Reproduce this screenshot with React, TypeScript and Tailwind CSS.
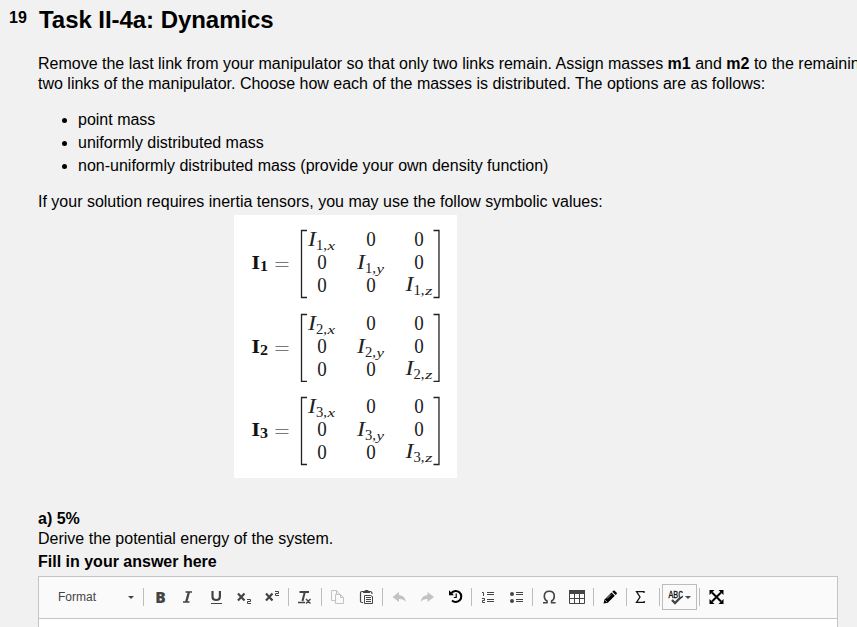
import type { ReactNode } from "react";

const mathFont = "'Liberation Serif', serif";

function Entry({ x, y, n, axis }: { x: number; y: number; n: number; axis: string }) {
  return (
    <g fill="#222" fontFamily={mathFont}>
      <text x={x + 0.5} y={y} fontSize="20" fontStyle="italic" textLength="8" lengthAdjust="spacingAndGlyphs">I</text>
      <text x={x + 8.5} y={y + 4} fontSize="14.500" textLength="11" lengthAdjust="spacingAndGlyphs">{n},</text>
      <text x={x + 20} y={y + 4} fontSize="13" fontStyle="italic" textLength="7.5" lengthAdjust="spacingAndGlyphs">{axis}</text>
    </g>
  );
}

function Zero({ x, y }: { x: number; y: number }) {
  return (
    <text x={x - 4.75} y={y} fontSize="20" fill="#222" textLength="9.500" lengthAdjust="spacingAndGlyphs" fontFamily={mathFont}>0</text>
  );
}

function Tensor({ n }: { n: number }) {
  return (
    <svg width="223" height="83.700" viewBox="0 0 223 83.700" className="block shrink-0">
      <text x="17.5" y="54.500" fontSize="19" fontWeight="bold" fill="#111" fontFamily={mathFont} textLength="8.5" lengthAdjust="spacingAndGlyphs">I</text>
      <text x="26" y="56.500" fontSize="14" fontWeight="bold" fill="#111" fontFamily={mathFont} textLength="8" lengthAdjust="spacingAndGlyphs">{n}</text>
      <path d="M41.5 47.5h13M41.5 51.5h13" stroke="#777" />
      <path d="M73 15.500h-5.500v67H73M199.500 15.500h5.500v67h-5.500" fill="none" stroke="#222" strokeWidth="1.300" />
      <Entry x={73.500} y={31} n={n} axis="x" />
      <Zero x={137} y={31.500} />
      <Zero x={185} y={31.500} />
      <Zero x={88} y={54.500} />
      <Entry x={122.500} y={54} n={n} axis="y" />
      <Zero x={185} y={54.500} />
      <Zero x={88} y={77} />
      <Zero x={137} y={77} />
      <Entry x={171} y={76.500} n={n} axis="z" />
    </svg>
  );
}

function Tool({ children, label }: { children: ReactNode; label: string }) {
  return (
    <button aria-label={label} className="flex h-7 w-7 shrink-0 items-center justify-center">
      <svg width="16" height="16" viewBox="0 0 16 16" fill="none" stroke="none" className="overflow-visible text-[#444]">
        {children}
      </svg>
    </button>
  );
}

function Sep() {
  return <span className="mx-[2px] h-[18px] w-px shrink-0 bg-[#bcbcbc]" />;
}

function Toolbar() {
  return (
    <div className="flex h-[42px] items-center border-b border-[#c4c4c4] bg-[#fafafa] pb-px pl-[19px]">
      <button className="flex w-[83px] items-center justify-between pr-[7px] text-left text-[12px] text-[#444]">
        <span>Format</span>
        <svg width="6" height="3" viewBox="0 0 6 3"><path d="M0 0h6L3 3z" fill="#444" /></svg>
      </button>
      <Sep />
      <Tool label="Bold">
        <text x="3.300" y="13.500" fontFamily="'Open Sans', sans-serif" fontWeight="800" fontSize="16" fill="#444" textLength="10.500" lengthAdjust="spacingAndGlyphs">B</text>
      </Tool>
      <Tool label="Italic">
        <path d="M5.500 3h6.500M3 13h6.500" stroke="#444" strokeWidth="1.600" />
        <path d="M8.900 3L6.200 13" stroke="#444" strokeWidth="2.300" />
      </Tool>
      <Tool label="Underline">
        <path d="M4.500 2v5.500q0 3.500 3.700 3.500t3.700-3.500V2" stroke="#444" strokeWidth="2.200" />
        <path d="M3 14.500h11" stroke="#444" />
      </Tool>
      <Tool label="Subscript">
        <path d="M2 4.500l6.500 7M8.500 4.500L2 11.500" stroke="#444" strokeWidth="2.200" />
        <path d="M11 10.500h3.500v2H11.500v2H15" stroke="#444" />
      </Tool>
      <Tool label="Superscript">
        <path d="M2 4.500l6.500 7M8.500 4.500L2 11.500" stroke="#444" strokeWidth="2.200" />
        <path d="M11 2.500h3.500v2H11.500v2H15" stroke="#444" />
      </Tool>
      <Sep />
      <Tool label="Remove format">
        <path d="M2.500 3h9.500M7.800 3L5.500 12" stroke="#444" strokeWidth="2" />
        <path d="M1 13.500h7M9 10l4.500 4.500M13.500 10L9 14.500" stroke="#444" strokeWidth="1.400" />
      </Tool>
      <Sep />
      <Tool label="Copy">
        <path d="M5 11.500H1.500v-10h5L9.500 5M5.500 14.500v-9h5l3 3v6zM10.500 5.500v3h3M6.500 1.500V5" stroke="#c2c2c2" />
      </Tool>
      <Tool label="Paste">
        <path d="M5 2.500H4Q2.500 2.500 2.500 4v8q0 1.500 1.500 1.500h1M12 2.500q2 0 2 2V5" stroke="#444" strokeWidth="1.200" />
        <path d="M5 4V2h1.500q0-1 1.500-1h1.500q1 0 1 1H12v2z" fill="#444" />
        <path d="M6.500 6.500h6l2 1v7h-8zM8 8.500h5M8 10.500h5M8 12.500h5" stroke="#444" />
      </Tool>
      <Sep />
      <Tool label="Undo">
        <path d="M1.500 8L8 3v3q6 .5 7 7-2.500-3.200-7-3v3z" fill="#c2c2c2" />
      </Tool>
      <Tool label="Redo">
        <path d="M15 8L8.500 3v3q-6 .5-7 7 2.500-3.200 7-3v3z" fill="#c2c2c2" />
      </Tool>
      <Tool label="History">
        <path d="M4.500 4A5.500 5.500 0 1 1 5 11.500" stroke="#000" strokeWidth="2.100" />
        <path d="M2 1.200L7 6.200H2z" fill="#000" />
        <path d="M9.200 4.500v4H6.800" stroke="#000" strokeWidth="1.200" />
      </Tool>
      <Sep />
      <Tool label="Numbered list">
        <path d="M7 3.500h7M7 5.500h7M7 10.500h7M7 12.500h7" stroke="#444" />
        <path d="M2 3.500h1.500V7M2 9.500h2.500v2h-2v2H5" stroke="#444" />
      </Tool>
      <Tool label="Bulleted list">
        <circle cx="4" cy="5" r="2" fill="#444" />
        <circle cx="4" cy="12" r="2" fill="#444" />
        <path d="M8 3.500h7M8 5.500h7M8 10.500h7M8 12.500h7" stroke="#444" />
      </Tool>
      <Sep />
      <Tool label="Special character">
        <path d="M2 13.800h4v-1.800Q3.300 10.500 3.300 7.300C3.300 4 5.300 2.200 8.300 2.200s5 1.800 5 5.100q0 3.200-2.700 4.700v1.800h4" stroke="#444" strokeWidth="1.600" />
      </Tool>
      <Tool label="Table">
        <path d="M0 1h16v4H0z" fill="#444" />
        <path d="M.5 4v10.500h15V4M0 9.500h16M5.500 5v9M10.500 5v9" stroke="#444" />
      </Tool>
      <Sep />
      <Tool label="Draw">
        <path d="M1.500 14.500l1-4 7-7 3.300 3.300-7 7zM10.300 2.700l1-1q.7-.5 1.400 0l2 2q.5.700 0 1.400l-1 1z" fill="#000" />
        <path d="M3.200 11.300l1.800 1.800M5 9.500l4-4" stroke="#fff" strokeWidth=".7" />
      </Tool>
      <Sep />
      <Tool label="Equation">
        <path d="M9 4V2.600H1.500L5 8l-3.500 5.400H9.200V12" stroke="#111" strokeWidth="1.300" />
      </Tool>
      <Sep />
      <button aria-label="Spell check" className="flex h-[26px] w-[35px] shrink-0 items-center border border-[#bcbcbc] pl-[5px]">
        <svg width="16" height="16" viewBox="0 0 16 16" className="overflow-visible">
          <text x="0.500" y="8.500" fontFamily="'Liberation Mono', monospace" fontSize="10.500" fill="#111" stroke="#111" strokeWidth=".3" textLength="14.500" lengthAdjust="spacingAndGlyphs">ABC</text>
          <path d="M4 11l3 3 5.500-5.500" fill="none" stroke="#444" strokeWidth="2.300" />
        </svg>
        <svg width="6" height="3" viewBox="0 0 6 3" className="ml-[1px]"><path d="M0 0h6L3 3z" fill="#444" /></svg>
      </button>
      <Sep />
      <Tool label="Full screen">
        <path d="M4 3.500l9 9M13 3.500l-9 9" stroke="#000" strokeWidth="2" />
        <path d="M1.500 1h5l-5 5zM15.500 1h-5l5 5zM1.500 15h5l-5-5zM15.500 15h-5l5-5z" fill="#000" />
      </Tool>
    </div>
  );
}

export default function App() {
  return (
    <main className="flex h-[627px] w-[857px] overflow-hidden bg-[#f1f1f1] font-['Liberation_Sans',Arial,sans-serif] text-[16px] leading-5 text-black">
      <div className="w-[38px] shrink-0 pt-2 pl-[9px] font-bold">19</div>
      <div className="w-[860px] shrink-0">
        <h1 className="pt-[5px] pl-px text-[24px] leading-[30px] font-bold tracking-[-0.05px]">Task II-4a: Dynamics</h1>
        <p className="mt-[19px] whitespace-nowrap">
          Remove the last link from your manipulator so that only two links remain. Assign masses <b>m1</b> and <b>m2</b> to the remaining<br />
          two links of the manipulator. Choose how each of the masses is distributed. The options are as follows:
        </p>
        <ul className="mt-[14px] list-disc pl-10 leading-[23px]">
          <li>point mass</li>
          <li>uniformly distributed mass</li>
          <li>non-uniformly distributed mass (provide your own density function)</li>
        </ul>
        <p className="mt-[15px]">If your solution requires inertia tensors, you may use the follow symbolic values:</p>
        <div className="mt-[3px] ml-[196px] h-[263px] w-[223px] bg-white">
          <Tensor n={1} />
          <Tensor n={2} />
          <Tensor n={3} />
        </div>
        <p className="mt-[31px]">
          <b>a) 5%</b>
          <br />
          Derive the potential energy of the system.
        </p>
        <p className="mt-[3px] font-bold">Fill in your answer here</p>
        <div className="mt-1 h-[80px] w-[800px] border border-[#c4c4c4] bg-white">
          <Toolbar />
        </div>
      </div>
    </main>
  );
}
